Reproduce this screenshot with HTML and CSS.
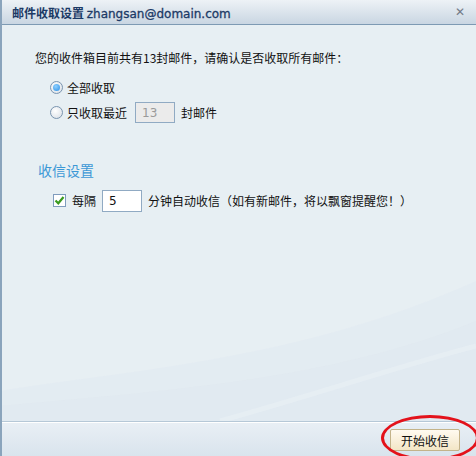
FILE: index.html
```html
<!DOCTYPE html>
<html lang="zh-CN">
<head>
    <meta charset="UTF-8">
    <title>邮件收取设置</title>
    <link rel="stylesheet" href="styles.css">
</head>
<body>
    <div class="dialog">
        <div class="titlebar">
            <span class="title">邮件收取设置 <span class="addr">zhangsan@domain.com</span></span>
            <span class="close">&#x2715;</span>
        </div>

        <div class="content">
            <svg class="waves" width="476" height="200" viewBox="0 0 476 200" preserveAspectRatio="none">
                <path d="M0 170 C120 150 300 140 476 60 L476 200 L0 200 Z" fill="#e1eaf1" opacity="0.6"/>
                <path d="M0 185 C160 170 330 160 476 100 L476 200 L0 200 Z" fill="#dfe8f0" opacity="0.5"/>
                <path d="M220 200 C310 175 400 145 476 125" stroke="#e9f0f5" stroke-width="5" fill="none" opacity="0.6"/>
            </svg>

            <p class="intro">您的收件箱目前共有13封邮件，请确认是否收取所有邮件：</p>
            <div class="options">
                <label class="row">
                    <span class="radio checked"></span>
                    <span>全部收取</span>
                </label>
                <label class="row">
                    <span class="radio"></span>
                    <span>只收取最近</span>
                    <span class="num-box disabled">13</span>
                    <span>封邮件</span>
                </label>
            </div>

            <h2 class="section">收信设置</h2>
            <label class="row check-row">
                <span class="checkbox">
                    <svg width="11" height="11" viewBox="0 0 11 11"><path d="M1.5 5.5 L4.3 8.3 L9.5 2" stroke="#3a9a1e" stroke-width="2.2" fill="none"/></svg>
                </span>
                <span>每隔</span>
                <span class="num-box">5</span>
                <span>分钟自动收信（如有新邮件，将以飘窗提醒您！）</span>
            </label>
        </div>

        <div class="footer">
            <button class="start-button">开始收信</button>
            <span class="ring"></span>
        </div>
    </div>
</body>
</html>
```

FILE: styles.css
```css
/* Dialog */
body {
    margin: 0;
    padding: 0;
    font-family: "Noto Sans CJK SC", "DejaVu Sans", sans-serif;
    font-size: 12px;
    color: #111;
}

.dialog {
    width: 476px;
    height: 456px;
    box-sizing: border-box;
    border-left: 2px solid #8aa4bc;
    background-color: #e7eff3;
    display: flex;
    flex-direction: column;
    overflow: hidden;
}

.titlebar {
    height: 24px;
    border-bottom: 1px solid #7d9ab3;
    background: linear-gradient(#edf2f6, #c9d6e2);
    display: flex;
    align-items: center;
    justify-content: space-between;
    padding: 0 11px 0 10px;
}

.title {
    font-weight: bold;
    color: #1c3a66;
    font-size: 12px;
}

.title .addr {
    font-family: "DejaVu Sans", sans-serif;
    font-weight: normal;
    font-size: 12px;
    -webkit-text-stroke: 0.3px #1c3a66;
}

.close {
    color: #737b86;
    font-size: 12px;
    font-weight: bold;
    font-family: "DejaVu Sans", sans-serif;
}

.content {
    flex: 1;
    position: relative;
    padding: 25px 0 0 33px;
}

.waves {
    position: absolute;
    left: -2px;
    bottom: 0;
}

.intro {
    position: relative;
    margin: 0;
    line-height: 16px;
}

.options {
    position: relative;
    margin: 9px 0 0 15px;
    display: flex;
    flex-direction: column;
}

.row {
    display: flex;
    align-items: center;
    height: 25px;
    gap: 4px;
}

.radio {
    width: 13px;
    height: 13px;
    box-sizing: border-box;
    border-radius: 50%;
    border: 1px solid #7a95b0;
    background: radial-gradient(circle at 40% 35%, #ffffff, #d6dde4);
    display: flex;
    align-items: center;
    justify-content: center;
}

.radio.checked::after {
    content: "";
    width: 7px;
    height: 7px;
    border-radius: 50%;
    background: radial-gradient(circle at 40% 35%, #8fd0ff, #2a8fe6);
}

.num-box {
    width: 40px;
    height: 22px;
    box-sizing: border-box;
    border: 1px solid #90aac3;
    background-color: #fff;
    font-family: "DejaVu Sans", sans-serif;
    font-size: 12px;
    line-height: 20px;
    padding-left: 6px;
    margin: 0 2px 0 4px;
}

.num-box.disabled {
    background-color: #ebebeb;
    color: #9a9a9a;
    height: 21px;
}

.section {
    position: relative;
    margin: 36px 0 0 3px;
    font-size: 14px;
    font-weight: normal;
    color: #3c98d6;
    line-height: 18px;
}

.check-row {
    position: relative;
    margin: 9px 0 0 18px;
    gap: 6px;
}

.check-row .num-box {
    margin: 0;
}

.checkbox {
    width: 13px;
    height: 13px;
    box-sizing: border-box;
    border: 1px solid #7f9cbd;
    background: #fff;
    display: flex;
    align-items: center;
    justify-content: center;
}

.footer {
    height: 34px;
    border-top: 1px solid #b6c8d7;
    box-shadow: inset 0 1px 0 #ffffff;
    background: linear-gradient(#e9eff5, #d9e4ed);
    display: flex;
    align-items: center;
    justify-content: flex-end;
    padding-right: 16px;
    position: relative;
}

.start-button {
    font-family: "Noto Sans CJK SC", sans-serif;
    font-size: 12px;
    color: #111;
    width: 70px;
    height: 22px;
    padding: 0;
    border: 1px solid #c3b38a;
    border-radius: 2px;
    background: linear-gradient(#fffaf0, #f3e6c6);
    margin-top: 2px;
}

/* red annotation ring */
.ring {
    position: absolute;
    left: 379px;
    top: -7px;
    width: 92px;
    height: 40px;
    border: 3px solid #e3121b;
    border-radius: 50%;
}
```
